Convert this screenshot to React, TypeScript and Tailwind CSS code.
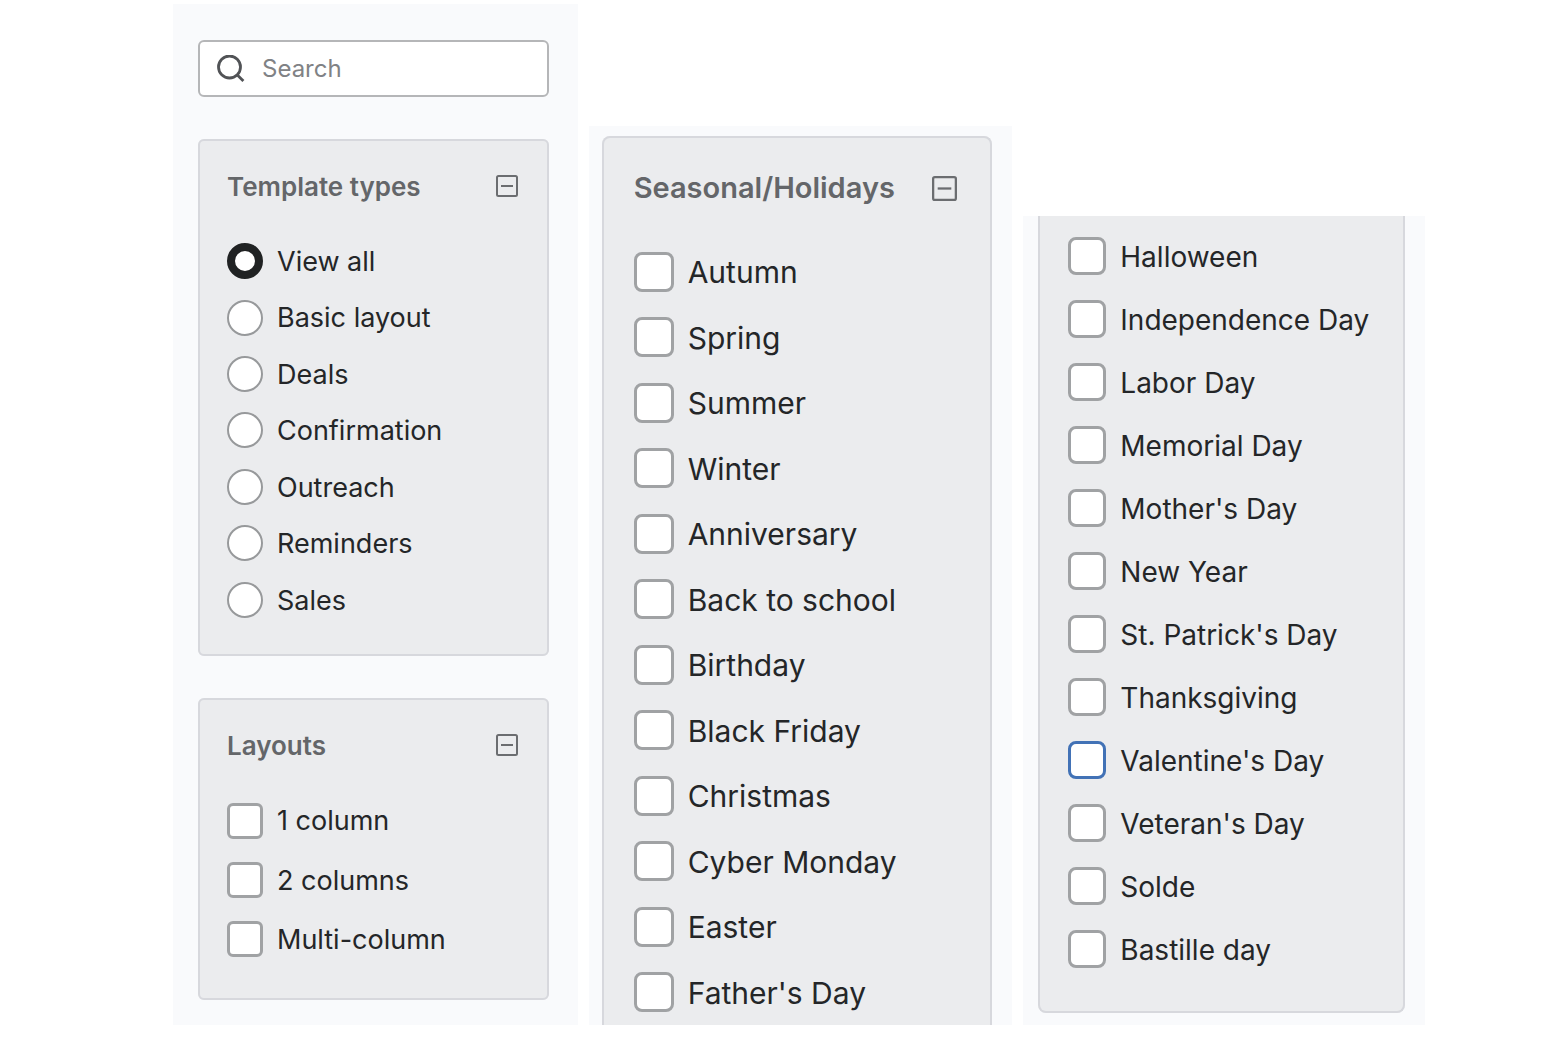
import { useState } from "react";

const templateTypes = ["View all", "Basic layout", "Deals", "Confirmation", "Outreach", "Reminders", "Sales"];
const layouts = ["1 column", "2 columns", "Multi-column"];
const seasonal = [
  "Autumn",
  "Spring",
  "Summer",
  "Winter",
  "Anniversary",
  "Back to school",
  "Birthday",
  "Black Friday",
  "Christmas",
  "Cyber Monday",
  "Easter",
  "Father's Day",
];
const moreHolidays = [
  "Halloween",
  "Independence Day",
  "Labor Day",
  "Memorial Day",
  "Mother's Day",
  "New Year",
  "St. Patrick's Day",
  "Thanksgiving",
  "Valentine's Day",
  "Veteran's Day",
  "Solde",
  "Bastille day",
];

function SearchIcon() {
  return (
    <svg viewBox="0 0 28 28" className="size-7 shrink-0" fill="none" stroke="#515356" strokeWidth="2.8" aria-hidden="true">
      <circle cx="12.5" cy="12" r="11" />
      <path d="M19.8 19.6 L26.4 26" />
    </svg>
  );
}

function CollapseButton({ label, className }: { label: string; className: string }) {
  return (
    <button type="button" aria-label={`Collapse ${label}`} className={`shrink-0 ${className}`}>
      <svg viewBox="0 0 22 22" className="size-full" fill="none" stroke="#6b6d70" strokeWidth="2" aria-hidden="true">
        <rect x="1" y="1" width="20" height="20" rx="1.5" />
        <path d="M5 11 H17" />
      </svg>
    </button>
  );
}

function Check({ label, box, accent = false }: { label: string; box: string; accent?: boolean }) {
  return (
    <label className="flex items-center gap-[14px]">
      <input
        type="checkbox"
        className={`shrink-0 appearance-none border-3 bg-white checked:bg-[#202223] ${accent ? "border-[#4272b6]" : "border-[#a0a2a4]"} ${box}`}
      />
      <span className="pt-0.5 whitespace-nowrap">{label}</span>
    </label>
  );
}

export default function App() {
  const [type, setType] = useState("View all");
  return (
    <main className="grid grid-cols-[405fr_424fr_402fr] items-end gap-[11px] bg-white pt-1 pr-[137px] pl-[173px] font-['Inter',sans-serif] text-[#242628]">
      <section className="min-w-0 bg-[#f9fafc] pt-9 pr-[29px] pb-[25px] pl-[25px]">
        <label className="flex h-[57px] items-center gap-[17px] rounded-md border-2 border-[#b5b6b8] bg-white pr-4 pl-[17px]">
          <SearchIcon />
          <input
            type="search"
            placeholder="Search"
            aria-label="Search"
            className="w-full min-w-0 flex-1 bg-transparent text-2xl outline-none placeholder:text-[#808285]"
          />
        </label>

        <fieldset className="mt-[42px] min-w-0 rounded-md border-2 border-[#d7d8dd] bg-[#ebecee] pr-[29px] pb-[26px] pl-[27px]">
          <div className="mb-0.5 flex h-[90px] items-center justify-between">
            <h2 className="text-[26px] font-semibold text-[#646669]">Template types</h2>
            <CollapseButton label="Template types" className="size-[22px]" />
          </div>
          <div className="grid min-h-[395px] auto-rows-fr text-[27px]">
            {templateTypes.map((t) => (
              <label key={t} className="flex items-center gap-[14px]">
                <input
                  type="radio"
                  name="template-type"
                  checked={type === t}
                  onChange={() => setType(t)}
                  className="size-9 shrink-0 appearance-none rounded-full border-2 border-[#97999b] bg-white checked:border-8 checked:border-[#202223]"
                />
                <span className="pt-0.5 whitespace-nowrap">{t}</span>
              </label>
            ))}
          </div>
        </fieldset>

        <fieldset className="mt-[42px] min-w-0 rounded-md border-2 border-[#d7d8dd] bg-[#ebecee] pr-[29px] pb-[29px] pl-[27px]">
          <div className="mb-px flex h-[90px] items-center justify-between">
            <h2 className="text-[26px] font-semibold text-[#646669]">Layouts</h2>
            <CollapseButton label="Layouts" className="size-[22px]" />
          </div>
          <div className="grid min-h-[178px] auto-rows-fr text-[27px]">
            {layouts.map((l) => (
              <Check key={l} label={l} box="size-9 rounded-md" />
            ))}
          </div>
        </fieldset>
      </section>

      <section className="min-w-0 bg-[#f9fafc] pt-[10px] pr-5 pl-[13px]">
        <fieldset className="min-w-0 rounded-t-lg border-2 border-b-0 border-[#d7d8dd] bg-[#ebecee] pr-[33px] pl-[30px]">
          <div className="mb-px flex h-[100px] items-center justify-between">
            <h2 className="text-[29px] font-semibold text-[#646669]">Seasonal/Holidays</h2>
            <CollapseButton label="Seasonal/Holidays" className="size-[25px]" />
          </div>
          <div className="grid min-h-[786px] auto-rows-fr text-[30px]">
            {seasonal.map((s) => (
              <Check key={s} label={s} box="size-10 rounded-lg" />
            ))}
          </div>
        </fieldset>
      </section>

      <section className="min-w-0 bg-[#f9fafc] pr-5 pb-3 pl-[15px]">
        <fieldset className="min-w-0 rounded-b-lg border-2 border-t-0 border-[#d7d8dd] bg-[#ebecee] pt-2 pr-7 pb-[30px] pl-7">
          <div className="grid min-h-[757px] auto-rows-fr text-[28px]">
            {moreHolidays.map((h) => (
              <Check key={h} label={h} box="size-[38px] rounded-lg" accent={h === "Valentine's Day"} />
            ))}
          </div>
        </fieldset>
      </section>
    </main>
  );
}
